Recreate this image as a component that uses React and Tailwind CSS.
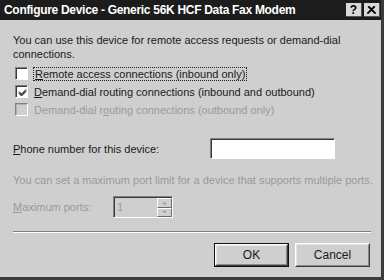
import React from 'react';

const Check = ({ checked, disabled }) => (
    <span
        className={`inline-flex w-[13px] h-[13px] shrink-0 items-center justify-center border-t-[#808080] border-l-[#808080] border-b-white border-r-white border ${disabled ? 'bg-[#cfcfcf]' : 'bg-white'}`}
    >
        <span className={`flex w-[11px] h-[11px] items-center justify-center border-t border-l ${disabled ? 'border-[#b0b0b0]' : 'border-[#3a3a3a]'}`}>
            {checked && (
                <svg width="9" height="9" viewBox="0 0 9 9">
                    <path d="M1 3.5 L3.5 6 L8 1.5 M1 4.5 L3.5 7 L8 2.5 M1 5.5 L3.5 8 L8 3.5" stroke="#111" strokeWidth="1" fill="none" />
                </svg>
            )}
        </span>
    </span>
);

const Raised = ({ children, isDefault, className = '' }) => (
    <div className={`${isDefault ? 'border border-[#111]' : ''} ${className}`}>
        <div className="h-full border border-t-white border-l-white border-b-[#3a3a3a] border-r-[#3a3a3a]">
            <div className="h-full flex items-center justify-center border border-t-[#e6e6e6] border-l-[#e6e6e6] border-b-[#8a8a8a] border-r-[#8a8a8a]">
                {children}
            </div>
        </div>
    </div>
);

const App = () => {
    return (
        <div
            className="w-[384px] h-[280px] bg-[#cfcfcf] border-r-[3px] border-b-[3px] border-[#3b3b3b] flex flex-col text-[#1a1a1a] text-[11px] leading-[14px]"
            style={{ fontFamily: '"Liberation Sans", Arial, sans-serif' }}
        >
            {/* title bar */}
            <div className="h-[20px] bg-[#1c1c1c] flex items-center justify-between pl-[4px] pr-[1px] shrink-0">
                <span className="text-white font-bold text-[12px] tracking-[-0.3px] whitespace-nowrap">
                    Configure Device - Generic 56K HCF Data Fax Modem
                </span>
                <div className="flex gap-[2px]">
                    <div className="w-[16px] h-[14px] bg-[#d8d8d8] flex items-center justify-center font-bold text-[12px] text-black border-b border-r border-[#555]">?</div>
                    <div className="w-[16px] h-[14px] bg-[#d8d8d8] flex items-center justify-center border-b border-r border-[#555]">
                        <svg width="9" height="8" viewBox="0 0 9 8">
                            <path d="M1 0.5 L8 7.5 M2 0.5 L9 7.5 M8 0.5 L1 7.5 M7 0.5 L0 7.5" stroke="#000" strokeWidth="1.1" fill="none" />
                        </svg>
                    </div>
                </div>
            </div>

            <div className="flex flex-col pl-[13px] pr-[11px]">
                <p className="mt-[13px]">
                    You can use this device for remote access requests or demand-dial
                    <br />
                    connections.
                </p>

                <div className="mt-[6px] flex flex-col gap-[5px]">
                    <label className="flex items-center gap-[5px] h-[13px] pl-[2px]">
                        <Check />
                        <span className="border border-dotted border-[#222] px-[1px] leading-[12px]">
                            <u>R</u>emote access connections (inbound only)
                        </span>
                    </label>
                    <label className="flex items-center gap-[6px] h-[13px] pl-[2px]">
                        <Check checked />
                        <span><u>D</u>emand-dial routing connections (inbound and outbound)</span>
                    </label>
                    <label className="flex items-center gap-[6px] h-[13px] pl-[2px] text-[#9a9a9a]">
                        <Check disabled />
                        <span>Demand-dial r<u>o</u>uting connections (outbound only)</span>
                    </label>
                </div>

                <div className="mt-[22px] flex items-center justify-between pr-[35px]">
                    <span><u>P</u>hone number for this device:</span>
                    <div className="w-[125px] h-[21px] bg-white border border-t-[#808080] border-l-[#808080] border-b-white border-r-white">
                        <div className="h-full border-t border-l border-[#3a3a3a]" />
                    </div>
                </div>

                <p className="mt-[14px] text-[#9a9a9a] whitespace-nowrap">
                    You can set a maximum port limit for a device that supports multiple ports.
                </p>

                <div className="mt-[9px] flex items-center">
                    <span className="w-[100px] text-[#9a9a9a]"><u>M</u>aximum ports:</span>
                    <div className="w-[60px] h-[22px] border border-t-[#808080] border-l-[#808080] border-b-white border-r-white">
                        <div className="h-full flex border-t border-l border-[#3a3a3a] bg-[#cfcfcf]">
                            <span className="flex-1 pl-[2px] pt-[2px] text-[#9a9a9a]">1</span>
                            <div className="w-[15px] flex flex-col">
                                {['M1 4 L4 1 L7 4 Z', 'M1 1 L4 4 L7 1 Z'].map((d) => (
                                    <div key={d} className="flex-1 flex items-center justify-center border border-t-white border-l-white border-b-[#6a6a6a] border-r-[#6a6a6a]">
                                        <svg width="7" height="4" viewBox="0 0 8 5">
                                            <path d={d} fill="#9a9a9a" />
                                        </svg>
                                    </div>
                                ))}
                            </div>
                        </div>
                    </div>
                </div>

                <div className="mt-[13px] mr-[-1px] h-[2px] border-t border-t-[#808080] border-b border-b-white" />

                <div className="mt-[10px] flex justify-end gap-[6px] text-[12px]">
                    <Raised isDefault className="w-[75px] h-[24px]">OK</Raised>
                    <Raised className="w-[75px] h-[24px]">Cancel</Raised>
                </div>
            </div>
        </div>
    );
};

export default App;
